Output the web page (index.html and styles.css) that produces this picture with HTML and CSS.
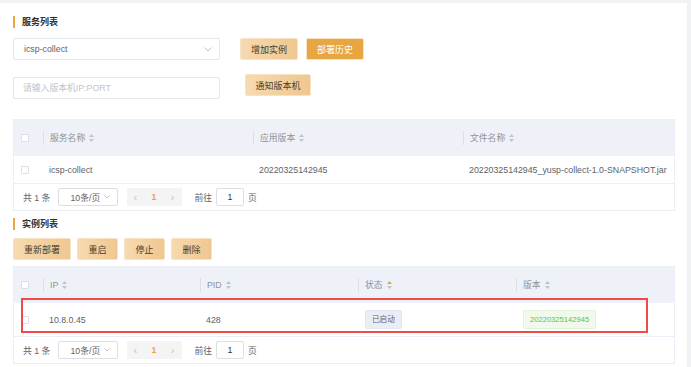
FILE: index.html
```html
<!DOCTYPE html>
<html lang="zh-CN">
<head>
  <meta charset="UTF-8" />
  <title>服务列表</title>
  <link rel="stylesheet" href="styles.css">
</head>
<body>

  <div class="card">
    <div class="section-title">服务列表</div>

    <div class="toolbar">
      <div class="select">
        <span>icsp-collect</span>
        <svg class="chevron" width="8" height="5" viewBox="0 0 8 5"><path d="M0.5 0.5 L4 4 L7.5 0.5" fill="none" stroke="#c0c4cc" stroke-width="1"/></svg>
      </div>
      <button class="btn btn-light btn-add">增加实例</button>
      <button class="btn btn-solid">部署历史</button>
    </div>

    <div class="toolbar toolbar-notify">
      <input class="ip-input" type="text" placeholder="请输入版本机IP:PORT">
      <button class="btn btn-light btn-notify">通知版本机</button>
    </div>

    <div class="table-box">
      <div class="grid grid-service head">
        <div class="cell check-cell"><span class="checkbox"></span></div>
        <div class="cell"><div class="th">服务名称 <svg class="sort" width="5" height="8" viewBox="0 0 5 8"><path d="M2.5 0 L5 3 L0 3 Z" fill="#c0c4cc"/><path d="M2.5 8 L5 5 L0 5 Z" fill="#c0c4cc"/></svg></div></div>
        <div class="cell"><div class="th">应用版本 <svg class="sort" width="5" height="8" viewBox="0 0 5 8"><path d="M2.5 0 L5 3 L0 3 Z" fill="#c0c4cc"/><path d="M2.5 8 L5 5 L0 5 Z" fill="#c0c4cc"/></svg></div></div>
        <div class="cell"><div class="th">文件名称 <svg class="sort" width="5" height="8" viewBox="0 0 5 8"><path d="M2.5 0 L5 3 L0 3 Z" fill="#c0c4cc"/><path d="M2.5 8 L5 5 L0 5 Z" fill="#c0c4cc"/></svg></div></div>
      </div>
      <div class="grid grid-service row row-service">
        <div class="cell check-cell"><span class="checkbox"></span></div>
        <div class="cell td">icsp-collect</div>
        <div class="cell td">20220325142945</div>
        <div class="cell td">20220325142945_yusp-collect-1.0-SNAPSHOT.jar</div>
      </div>
      <div class="pager">
        <span>共 1 条</span>
        <div class="page-size">
          <span>10条/页</span>
          <svg width="6" height="4" viewBox="0 0 6 4"><path d="M0.5 0.5 L3 3 L5.5 0.5" fill="none" stroke="#c0c4cc" stroke-width="1"/></svg>
        </div>
        <div class="pages">
          <span class="arrow">&lsaquo;</span>
          <span class="current">1</span>
          <span class="arrow">&rsaquo;</span>
        </div>
        <span class="goto">前往</span>
        <div class="goto-input">1</div>
        <span>页</span>
      </div>
    </div>

    <div class="section-title section-two">实例列表</div>

    <div class="actions">
      <button class="btn btn-light btn-wide">重新部署</button>
      <button class="btn btn-light">重启</button>
      <button class="btn btn-light">停止</button>
      <button class="btn btn-light">删除</button>
    </div>

    <div class="table-box table-instances">
      <div class="grid grid-instance head">
        <div class="cell check-cell"><span class="checkbox"></span></div>
        <div class="cell"><div class="th">IP <svg class="sort" width="5" height="8" viewBox="0 0 5 8"><path d="M2.5 0 L5 3 L0 3 Z" fill="#c0c4cc"/><path d="M2.5 8 L5 5 L0 5 Z" fill="#c0c4cc"/></svg></div></div>
        <div class="cell"><div class="th">PID <svg class="sort" width="5" height="8" viewBox="0 0 5 8"><path d="M2.5 0 L5 3 L0 3 Z" fill="#c0c4cc"/><path d="M2.5 8 L5 5 L0 5 Z" fill="#c0c4cc"/></svg></div></div>
        <div class="cell"><div class="th">状态 <svg class="sort" width="5" height="8" viewBox="0 0 5 8"><path d="M2.5 0 L5 3 L0 3 Z" fill="#e8a644"/><path d="M2.5 8 L5 5 L0 5 Z" fill="#c0c4cc"/></svg></div></div>
        <div class="cell"><div class="th">版本 <svg class="sort" width="5" height="8" viewBox="0 0 5 8"><path d="M2.5 0 L5 3 L0 3 Z" fill="#c0c4cc"/><path d="M2.5 8 L5 5 L0 5 Z" fill="#c0c4cc"/></svg></div></div>
      </div>
      <div class="grid grid-instance row row-instance">
        <div class="cell check-cell"><span class="checkbox"></span></div>
        <div class="cell td">10.8.0.45</div>
        <div class="cell td">428</div>
        <div class="cell td"><span class="tag tag-info">已启动</span></div>
        <div class="cell td"><span class="tag tag-success">20220325142945</span></div>
      </div>
      <div class="pager">
        <span>共 1 条</span>
        <div class="page-size">
          <span>10条/页</span>
          <svg width="6" height="4" viewBox="0 0 6 4"><path d="M0.5 0.5 L3 3 L5.5 0.5" fill="none" stroke="#c0c4cc" stroke-width="1"/></svg>
        </div>
        <div class="pages">
          <span class="arrow">&lsaquo;</span>
          <span class="current">1</span>
          <span class="arrow">&rsaquo;</span>
        </div>
        <span class="goto">前往</span>
        <div class="goto-input">1</div>
        <span>页</span>
      </div>

      <!-- выделение строки -->
      <div class="highlight"></div>
    </div>
  </div>

</body>
</html>
```

FILE: styles.css
```css
* {
  box-sizing: border-box;
}

body {
  margin: 0;
  padding: 0;
  background-color: #f0f2f5;
  font-family: "Liberation Sans", "Noto Sans CJK SC", sans-serif;
  font-size: 8.8px;
  color: #606266;
}

.card {
  margin-top: 3px;
  width: 687px;
  height: 364px;
  background-color: #fff;
  padding: 13px 13px 0;
}

.section-title {
  height: 12px;
  line-height: 12px;
  border-left: 2px solid #e8a644;
  padding-left: 7px;
  font-weight: 600;
  font-size: 9px;
  color: #303133;
}

.section-two {
  margin-top: 7px;
}

.toolbar {
  display: flex;
  align-items: flex-start;
  margin-top: 10px;
}

.toolbar-notify {
  margin-top: 14px;
}

.select {
  width: 207px;
  height: 22px;
  border: 1px solid #e4e7ed;
  border-radius: 2px;
  display: flex;
  align-items: center;
  justify-content: space-between;
  padding: 0 7px 0 10px;
  color: #606266;
}

.ip-input {
  width: 207px;
  height: 22px;
  margin-top: 3px;
  border: 1px solid #e4e7ed;
  border-radius: 2px;
  padding: 0 9px;
  font-family: inherit;
  font-size: 8.8px;
  outline: none;
}

.ip-input::placeholder {
  color: #c0c4cc;
}

.btn {
  height: 22px;
  width: 58px;
  padding: 0;
  border: 1px solid #f7e3c4;
  border-radius: 2px;
  font-family: inherit;
  font-size: 9px;
  cursor: pointer;
}

.btn-light {
  background: linear-gradient(to right, #f7dab0, #efc790);
  color: #4a3b2b;
}

.btn-solid {
  background-color: #e8a642;
  color: #fff;
  margin-left: 8px;
}

.btn-add {
  margin-left: 20px;
}

.btn-notify {
  margin-left: 25px;
  width: 66px;
}

.table-box {
  margin-top: 20px;
  border: 1px solid #ebeef5;
  width: 662px;
}

.grid {
  display: grid;
  align-items: center;
}

.grid-service {
  grid-template-columns: 29px 210px 210px 1fr;
}

.grid-instance {
  grid-template-columns: 29px 157px 158px 158px 1fr;
}

.head {
  height: 36px;
  background-color: #eef1f8;
  color: #909399;
}

.row {
  border-bottom: 1px solid #ebeef5;
}

.row-service {
  height: 28px;
}

.row-instance {
  height: 34px;
}

.check-cell {
  padding-left: 7px;
  display: flex;
  align-items: center;
}

.checkbox {
  width: 8px;
  height: 8px;
  border: 1px solid #dcdfe6;
  border-radius: 1px;
  background: #fff;
}

.th {
  border-left: 1px solid #dcdfe6;
  padding-left: 6px;
  line-height: 14px;
  display: flex;
  align-items: center;
  gap: 4px;
}

.td {
  padding-left: 6px;
  white-space: nowrap;
}

.tag {
  display: inline-block;
  height: 19px;
  line-height: 17px;
  border-radius: 2px;
  font-size: 7.6px;
  padding: 0 6px;
  border: 1px solid transparent;
}

.tag-info {
  margin-left: 1px;
  background-color: #eaedf5;
  border-color: #e3e7f0;
  color: #5f6270;
}

.tag-success {
  margin-left: 1px;
  background-color: #f0f9eb;
  border-color: #e1f3d8;
  color: #67c23a;
}

.pager {
  height: 26px;
  display: flex;
  align-items: center;
  padding-left: 9px;
  color: #606266;
}

.page-size {
  margin-left: 8px;
  width: 60px;
  height: 18px;
  border: 1px solid #dcdfe6;
  border-radius: 2px;
  display: flex;
  align-items: center;
  justify-content: space-between;
  padding: 0 7px 0 11px;
}

.pages {
  margin-left: 9px;
  width: 55px;
  height: 18px;
  background-color: #f4f4f5;
  display: flex;
  align-items: center;
  justify-content: space-between;
  padding: 0 8px 0 6px;
}

.arrow {
  color: #c0c4cc;
  font-size: 11px;
}

.current {
  color: #e8a644;
  font-weight: bold;
}

.goto {
  margin-left: 12px;
}

.goto-input {
  margin: 0 4px 0 4px;
  width: 28px;
  height: 18px;
  border: 1px solid #dcdfe6;
  border-radius: 2px;
  text-align: center;
  line-height: 16px;
  color: #303133;
}

.actions {
  display: flex;
  gap: 6px;
  margin-top: 8px;
}

.actions .btn {
  width: 41px;
}

.actions .btn-wide {
  width: 58px;
}

.table-instances {
  margin-top: 6px;
  position: relative;
}

.highlight {
  position: absolute;
  left: 7px;
  top: 31px;
  width: 627px;
  height: 35px;
  border: 2px solid #f04a4a;
}
```
